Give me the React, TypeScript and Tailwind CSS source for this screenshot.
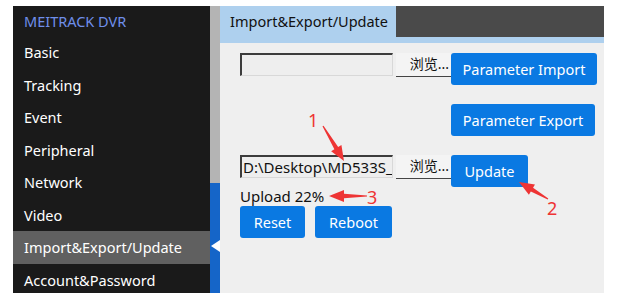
import React from 'react';

const menu = ['Basic', 'Tracking', 'Event', 'Peripheral', 'Network', 'Video', 'Import&Export/Update', 'Account&Password'];

function arrowPoints(tx: number, ty: number, px: number, py: number) {
  const dx = px - tx;
  const dy = py - ty;
  const len = Math.hypot(dx, dy);
  const ux = dx / len;
  const uy = dy / len;
  const nx = -uy;
  const ny = ux;
  const bx = px - ux * 15;
  const by = py - uy * 15;
  const pts = [
    [tx + nx * 0.6, ty + ny * 0.6],
    [bx + nx * 2.2, by + ny * 2.2],
    [bx + nx * 6, by + ny * 6],
    [px, py],
    [bx - nx * 6, by - ny * 6],
    [bx - nx * 2.2, by - ny * 2.2],
    [tx - nx * 0.6, ty - ny * 0.6],
  ];
  return pts.map((p) => p.join(',')).join(' ');
}

function FileRow({ value }: { value: string }) {
  return (
    <div className="flex items-start">
      <div className="w-[153px] h-[23px] bg-[#eeeeee] border-t-2 border-l-2 border-t-[#3c3c3c] border-l-[#3c3c3c] border-b border-r border-b-[#d8d8d8] border-r-[#d8d8d8] overflow-hidden whitespace-nowrap text-[15px] leading-[20px] text-[#111] pl-[1px]">
        {value}
      </div>
      <div className="ml-[3px] w-[55px] h-[24px] bg-[#f4f4f4] border-b border-[#444] text-[14px] leading-[22px] text-[#111] text-right pr-[2px] whitespace-nowrap">
        浏览...
      </div>
    </div>
  );
}

function Btn({ label, w }: { label: string; w: string }) {
  return (
    <div className={`${w} h-[32px] bg-[#0a79e2] rounded-[3px] text-white text-[14.5px] leading-[32px] text-center whitespace-nowrap`}>
      {label}
    </div>
  );
}

export default function App() {
  return (
    <div
      className="relative w-[621px] h-[303px] bg-white pl-[13px] pt-[6px] overflow-hidden"
      style={{ fontFamily: '"Noto Sans", "Noto Sans CJK SC", sans-serif' }}
    >
      <div className="flex h-[287px] w-[591px]">
        <div className="w-[197px] bg-[#1a1a1a] flex flex-col">
          <div className="h-[30px] pl-[11px] text-[14.5px] leading-[30px] text-[#6f8fea]">MEITRACK DVR</div>
          {menu.map((m, i) => (
            <div
              key={m}
              className={`h-[32.5px] shrink-0 pl-[11px] text-[14.5px] leading-[32px] text-white whitespace-nowrap ${i === 6 ? 'bg-[#606060]' : ''}`}
            >
              {m}
            </div>
          ))}
        </div>
        <div className="relative w-[10px] flex flex-col">
          <div className="h-[177px] bg-[#b4b4b4]" />
          <div className="flex-1 bg-[#1565c8]" />
          <div className="absolute left-[1px] top-[234px] w-0 h-0 border-y-[6px] border-y-transparent border-r-[9px] border-r-white" />
        </div>
        <div className="flex-1 bg-[#efefef] flex flex-col">
          <div className="flex h-[31px]">
            <div className="w-[176px] bg-[#aed0ee] pl-[10px] text-[14.5px] leading-[31px] text-[#111] whitespace-nowrap">
              Import&amp;Export/Update
            </div>
            <div className="flex-1 bg-[#4a4a4a]" />
          </div>
          <div className="h-[6px] bg-[#aed0ee]" />
          <div className="pl-[20px] pt-[10px] flex flex-col">
            <div className="flex items-start">
              <FileRow value="" />
              <Btn label="Parameter Import" w="w-[146px]" />
            </div>
            <div className="mt-[19px] ml-[211px]">
              <Btn label="Parameter Export" w="w-[144px]" />
            </div>
            <div className="mt-[19px] flex items-start">
              <FileRow value="D:\Desktop\MD533S_V" />
              <Btn label="Update" w="w-[77px]" />
            </div>
            <div className="h-[19px] text-[15px] leading-[19px] text-[#111]">Upload 22%</div>
            <div className="flex gap-[10px]">
              <Btn label="Reset" w="w-[65px]" />
              <Btn label="Reboot" w="w-[77px]" />
            </div>
          </div>
        </div>
      </div>

      <svg className="absolute inset-0 pointer-events-none" width="621" height="303">
        <polygon points={arrowPoints(323, 126, 344, 161)} fill="#ee3434" />
        <polygon points={arrowPoints(548, 199, 519, 182)} fill="#ee3434" />
        <polygon points={arrowPoints(367, 196, 329, 196)} fill="#ee3434" />
      </svg>
      <span className="absolute left-[308px] top-[108px] text-[18px] leading-[24px] text-[#ee3434]">1</span>
      <span className="absolute left-[547px] top-[196px] text-[18px] leading-[24px] text-[#ee3434]">2</span>
      <span className="absolute left-[367px] top-[185px] text-[18px] leading-[24px] text-[#ee3434]">3</span>
    </div>
  );
}
